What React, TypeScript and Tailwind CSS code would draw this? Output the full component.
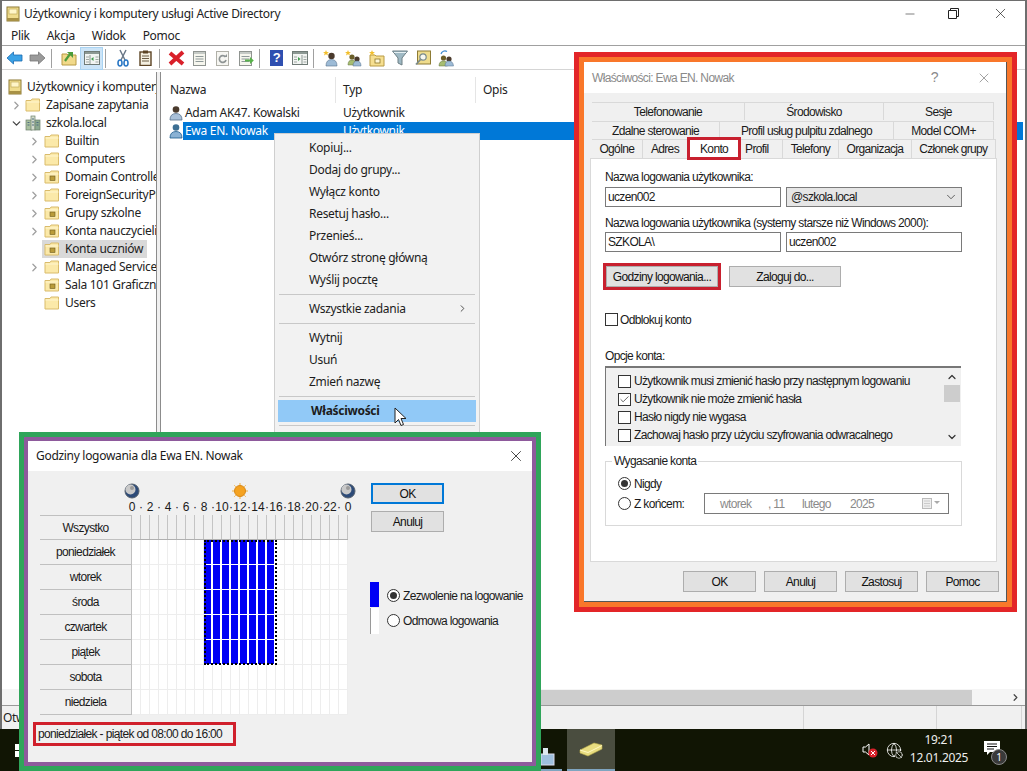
import React from "react";
import { ChevronRight, ChevronDown, ChevronUp, X, Minus, Check, Globe, Ban } from "lucide-react";

const ui = "font-['Noto_Sans','Open_Sans',sans-serif] tracking-[-0.3px]";
const dlg = "font-['Liberation_Sans',Arial,sans-serif] tracking-[-0.65px]";

const Folder = ({ ou = false }: { ou?: boolean }) => (
  <svg width="16" height="14" viewBox="0 0 16 14" className="shrink-0">
    <path d="M1 2.5 h5 l1-1.5 h7.5 v12 h-13.5z" fill="#fbe9a9" stroke="#d9bb6b" />
    <path d="M1.5 4 h13" stroke="#fff6d0" />
    {ou && <rect x="6" y="6" width="5" height="4.5" fill="#b99b3a" stroke="#6d5a1f" strokeWidth="0.6" />}
  </svg>
);

const RootIcon = () => (
  <svg width="14" height="16" viewBox="0 0 14 16" className="shrink-0">
    <rect x="1" y="1" width="12" height="14" fill="#f0dd8e" stroke="#8d7b35" />
    <rect x="3" y="3" width="8" height="5" fill="#fff6c8" stroke="#b9a24f" strokeWidth="0.6" />
    <rect x="1" y="12" width="12" height="3" fill="#a89145" />
  </svg>
);

const DomainIcon = () => (
  <svg width="16" height="16" viewBox="0 0 16 16" className="shrink-0">
    <rect x="1" y="5" width="6" height="10" fill="#a9c0a0" stroke="#6c7f6a" strokeWidth="0.7" />
    <rect x="6" y="1" width="4" height="14" fill="#d3dccd" stroke="#6c7f6a" strokeWidth="0.7" />
    <rect x="10" y="5" width="5" height="10" fill="#8ba990" stroke="#6c7f6a" strokeWidth="0.7" />
    <path d="M2.5 7.5h2M2.5 10h2M11.5 7.5h2M11.5 10h2M7 4h2M7 7h2M7 10h2" stroke="#4f6d7f" />
  </svg>
);

const UserIcon = ({ selected = false }: { selected?: boolean }) => (
  <svg width="14" height="16" viewBox="0 0 14 16" className="shrink-0">
    <circle cx="7" cy="4.5" r="3.3" fill={selected ? "#3d6f93" : "#4a3a2c"} />
    <path d="M1 15 q0-6.5 6-6.5 t6 6.5z" fill={selected ? "#8ab2d4" : "#a9c0d8"} stroke={selected ? "#1b5a8c" : "#55708c"} strokeWidth="0.8" />
  </svg>
);

const ArrowBtn = ({ color, edge, flip = false }: { color: string; edge: string; flip?: boolean }) => (
  <svg width="17" height="14" viewBox="0 0 17 14" className={flip ? "-scale-x-100" : ""}>
    <path d="M1 7 L7.5 1 V4 H16 V10 H7.5 V13z" fill={color} stroke={edge} strokeWidth="0.8" />
  </svg>
);

const Doc = ({ accent }: { accent?: string }) => (
  <svg width="16" height="17" viewBox="0 0 16 17">
    <rect x="1.5" y="1.5" width="12" height="14" fill="#f6f6ee" stroke="#8f9490" />
    <rect x="2" y="2" width="11" height="2" fill="#c5cac6" />
    <path d="M3.5 6.5h8M3.5 9h8M3.5 11.5h8" stroke="#8f9a9a" />
    {accent && <path d="M7 9.5h5V7l3.8 3.5L12 14v-2.5H7z" fill={accent} />}
  </svg>
);

const PanelIcon = ({ mark, right = false }: { mark: string; right?: boolean }) => (
  <svg width="16" height="14" viewBox="0 0 16 14">
    <rect x="0.5" y="0.5" width="15" height="13" fill="#f2f4f2" stroke="#6f7a76" />
    <rect x="1" y="1" width="14" height="2" fill="#8c9893" />
    <path d={right ? "M10 4v9" : "M6 4v9"} stroke="#8c9893" />
    <path d="M2 6h3M2 8.5h3M2 11h3M11.5 6h3M11.5 8.5h3M11.5 11h3" stroke="#a0a8a4" />
    <path d={right ? "M6 6v4l2.5-2z" : "M9.5 6v4l-2.5-2z"} fill={mark} />
  </svg>
);

const Star = ({ x, y }: { x: number; y: number }) => (
  <path transform={`translate(${x} ${y})`} d="M3 0l.8 2H6L4.3 3.3 5 5.5 3 4.3 1 5.5l.7-2.2L0 2h2.2z" fill="#f2bf2c" />
);

const Toolbar = () => {
  const sep = <div className="w-px h-[19px] bg-[#a0a0a0] ml-[2px] mr-[5px]" />;
  const slot = "w-[23px] h-[23px] flex items-center justify-center shrink-0";
  return (
    <div className="h-[24px] flex items-center pl-px pt-px border-b border-[#d5d5d5]">
      <div className={slot}><ArrowBtn color="#3ba2e6" edge="#1a6ab0" /></div>
      <div className={slot}><ArrowBtn color="#9a9a9a" edge="#777" flip /></div>
      {sep}
      <div className={slot}>
        <svg width="16" height="16" viewBox="0 0 16 16"><path d="M1 4h5l1 1h8v10H1z" fill="#f1d98a" stroke="#b89a45" /><path d="M4 11 l5-7" stroke="#4c9c3a" strokeWidth="2.2" fill="none" /><path d="M6 2h6v6z" fill="#4c9c3a" /></svg>
      </div>
      <div className={`${slot} bg-[#cce4f7] border border-[#a9d3f2]`}><PanelIcon mark="#3e9c4c" /></div>
      {sep}
      <div className={slot}>
        <svg width="12" height="18" viewBox="0 0 12 18"><path d="M9 1 L4 11 M3 1 l5 10" stroke="#6a7888" strokeWidth="1.5" /><ellipse cx="3" cy="14" rx="2" ry="3" fill="none" stroke="#2b78c5" strokeWidth="1.6" /><ellipse cx="9" cy="14" rx="2" ry="3" fill="none" stroke="#2b78c5" strokeWidth="1.6" /></svg>
      </div>
      <div className={slot}>
        <svg width="13" height="16" viewBox="0 0 13 16"><rect x="1" y="2" width="11" height="13.5" fill="#f4efe0" stroke="#5c4424" strokeWidth="1.4" /><rect x="4" y="0.5" width="5" height="3" fill="#5c4424" /><path d="M3 6h7M3 8.5h7M3 11h7" stroke="#6b5c44" /></svg>
      </div>
      {sep}
      <div className={slot}>
        <svg width="17" height="16" viewBox="0 0 17 16"><path d="M2 3 L15 14 M15 2 L2 14" stroke="#d9202a" strokeWidth="4" /></svg>
      </div>
      <div className={slot}><Doc /></div>
      <div className={slot}>
        <svg width="16" height="17" viewBox="0 0 16 17"><rect x="1.5" y="1.5" width="12" height="14" fill="#f6f6f2" stroke="#b0b0a8" /><path d="M10.5 7a3.4 3.4 0 1 0 .5 3" fill="none" stroke="#8e9494" strokeWidth="1.7" /><path d="M9 7h3V4z" fill="#8e9494" /></svg>
      </div>
      <div className={slot}><Doc accent="#58b24a" /></div>
      {sep}
      <div className={slot}>
        <div className={`w-[13px] h-[16px] bg-[#2f4fb0] text-white text-[13px] leading-[16px] text-center font-bold ${dlg}`}>?</div>
      </div>
      <div className={slot}><PanelIcon mark="#3e9c4c" right /></div>
      {sep}
      <div className={slot}>
        <svg width="16" height="17" viewBox="0 0 16 17"><Star x={0} y={0} /><circle cx="8.5" cy="6" r="3.2" fill="#4a3a2c" /><path d="M3 16q0-6.5 5.5-6.5T14 16z" fill="#9dbbd6" stroke="#55708c" strokeWidth="0.6" /></svg>
      </div>
      <div className={slot}>
        <svg width="17" height="17" viewBox="0 0 17 17"><Star x={0} y={0} /><circle cx="7" cy="7" r="2.6" fill="#6b5f2a" /><circle cx="12" cy="9" r="2.6" fill="#4a3a2c" /><path d="M3 15q0-5 4-5t4 5z" fill="#a7bd72" stroke="#60703c" strokeWidth="0.5" /><path d="M8 16q0-5 4-5t4 5z" fill="#9dbbd6" stroke="#55708c" strokeWidth="0.5" /></svg>
      </div>
      <div className={slot}>
        <svg width="16" height="17" viewBox="0 0 16 17"><path d="M1 5h5l1 1h8v10H1z" fill="#f6df90" stroke="#b89a45" /><rect x="6" y="9" width="5" height="4" fill="#fff8d8" stroke="#8a742a" strokeWidth="0.8" /><Star x={0} y={0} /></svg>
      </div>
      <div className={slot}>
        <svg width="16" height="16" viewBox="0 0 16 16"><path d="M0.5 1h15L10 8v7l-4-2V8z" fill="#9fb9c4" stroke="#6c7e84" /><path d="M2 2.5h12" stroke="#e6f0f3" /></svg>
      </div>
      <div className={slot}>
        <svg width="16" height="16" viewBox="0 0 16 16"><rect x="2.5" y="1" width="13" height="13" fill="#efdc8d" stroke="#8d7b35" /><circle cx="8" cy="7" r="3.2" fill="#f8f8f0" stroke="#7a8a8a" strokeWidth="1.2" /><path d="M5.5 9.5l-4.5 5" stroke="#7a8a8a" strokeWidth="1.8" /></svg>
      </div>
      <div className={slot}>
        <svg width="16" height="17" viewBox="0 0 16 17"><circle cx="5.5" cy="8" r="2.6" fill="#6b5f2a" /><circle cx="11" cy="9" r="2.6" fill="#4a3a2c" /><path d="M1 16q0-5 4.5-5t4 5z" fill="#a7bd72" stroke="#60703c" strokeWidth="0.5" /><path d="M7 16q0-5 4-5t4.5 5z" fill="#9dbbd6" stroke="#55708c" strokeWidth="0.5" /><path d="M3 4a4 4 0 0 1 6-2.5" stroke="#3b8ad0" strokeWidth="1.2" fill="none" /></svg>
      </div>
    </div>
  );
};

const tree: [string, boolean, boolean, boolean?][] = [
  ["Builtin", true, false],
  ["Computers", true, false],
  ["Domain Controllers", true, true],
  ["ForeignSecurityPrincipals", true, false],
  ["Grupy szkolne", true, true],
  ["Konta nauczycieli", true, true],
  ["Konta uczniów", false, true, true],
  ["Managed Service Accounts", true, false],
  ["Sala 101 Graficzna", false, true],
  ["Users", false, false],
];

const TreePane = () => (
  <div className="w-[154px] shrink-0 overflow-hidden pt-[6px] text-[12px] text-[#222]">
    <div className="h-[18px] flex items-center pl-[6px] gap-[5px] whitespace-nowrap"><RootIcon /><span>Użytkownicy i komputery</span></div>
    <div className="h-[18px] flex items-center pl-[8px] whitespace-nowrap">
      <ChevronRight size={13} color="#a0a0a0" strokeWidth={2.4} className="shrink-0" />
      <div className="w-[2px]" /><Folder /><span className="ml-[5px]">Zapisane zapytania</span>
    </div>
    <div className="h-[18px] flex items-center pl-[8px] whitespace-nowrap">
      <ChevronDown size={13} color="#444" strokeWidth={2.4} className="shrink-0" />
      <div className="w-[2px]" /><DomainIcon /><span className="ml-[5px]">szkola.local</span>
    </div>
    {tree.map(([name, exp, ou, sel]) => (
      <div key={name} className="h-[18px] flex items-center pl-[26px] whitespace-nowrap">
        <div className="w-[14px] shrink-0">{exp && <ChevronRight size={13} color="#a0a0a0" strokeWidth={2.4} />}</div>
        <div className={`flex items-center h-[18px] pl-[2px] pr-[4px] ${sel ? "bg-[#d9d9d9]" : ""}`}>
          <Folder ou={ou} /><span className="ml-[5px]">{name}</span>
        </div>
      </div>
    ))}
  </div>
);

const ListPane = () => (
  <div className="flex-1 min-w-0 overflow-hidden text-[12px] text-[#222]">
    <div className="h-[31px] flex items-center pt-[5px]">
      <div className="w-[175px] pl-[9px] border-r border-[#e5e5e5] h-full flex items-center">Nazwa</div>
      <div className="w-[140px] pl-[7px] border-r border-[#e5e5e5] h-full flex items-center">Typ</div>
      <div className="pl-[7px]">Opis</div>
    </div>
    <div className="h-[19px] flex items-center pl-[8px]">
      <UserIcon /><span className="w-[159px] ml-[1px] pl-[1px]">Adam AK47. Kowalski</span><span>Użytkownik</span>
    </div>
    <div className="h-[18px] flex items-center pl-[8px] pr-[2px]">
      <UserIcon selected />
      <div className="flex-1 h-full bg-[#0078d7] text-white flex items-center pl-[2px]">
        <span className="w-[158px]">Ewa EN. Nowak</span><span>Użytkownik</span>
      </div>
    </div>
  </div>
);

const ContextMenu = () => {
  const item = "h-[22px] flex items-center pl-[33px] pr-[10px]";
  const sep = <div className="h-px bg-[#c8c8c8] mx-[3px] my-[3px]" />;
  return (
    <div className="absolute left-[274px] top-[133px] w-[206px] h-[320px] bg-[#f2f2f2] border border-[#cfcfcf] pt-[2.5px] text-[12px] text-[#1c1c1c] px-px">
      {["Kopiuj...", "Dodaj do grupy...", "Wyłącz konto", "Resetuj hasło...", "Przenieś...", "Otwórz stronę główną", "Wyślij pocztę"].map((t) => (
        <div key={t} className={item}>{t}</div>
      ))}
      {sep}
      <div className={`${item} justify-between`}><span>Wszystkie zadania</span><ChevronRight size={11} color="#444" /></div>
      {sep}
      {["Wytnij", "Usuń", "Zmień nazwę"].map((t) => (
        <div key={t} className={item}>{t}</div>
      ))}
      {sep}
      <div className={`${item} bg-[#91c9f7] font-bold mx-[2px] pl-[31px]`}>Właściwości</div>
      {sep}
      <svg width="14" height="20" viewBox="0 0 14 20" className="absolute left-[119px] top-[273px]">
        <path d="M1 1v15l3.5-3.5 2.5 6 2.5-1-2.5-6h5z" fill="#fff" stroke="#222" strokeWidth="1" />
      </svg>
    </div>
  );
};

const Box = ({ w, h, children, bg = "bg-white" }: { w: string; h?: string; children?: React.ReactNode; bg?: string }) => (
  <div className={`${w} ${h ?? "h-[20px]"} ${bg} border border-[#7a7a7a] flex items-center pl-[2px] leading-none`}>{children}</div>
);

const WinBtn = ({ label, cls = "" }: { label: string; cls?: string }) => (
  <div className={`h-[21px] flex items-center justify-center whitespace-nowrap bg-[#e1e1e1] border border-[#adadad] text-[#111] ${cls}`}>{label}</div>
);

const Check13 = ({ on = false }: { on?: boolean }) => (
  <div className="w-[13px] h-[13px] shrink-0 border border-[#333] bg-white flex items-center justify-center">
    {on && <Check size={11} color="#333" strokeWidth={1.6} />}
  </div>
);

const Radio = ({ on = false }: { on?: boolean }) => (
  <div className="w-[13px] h-[13px] shrink-0 rounded-full border border-[#333] bg-white flex items-center justify-center">
    {on && <div className="w-[7px] h-[7px] rounded-full bg-[#333]" />}
  </div>
);

const Tab = ({ w, label, cls = "" }: { w: string; label: string; cls?: string }) => (
  <div className={`${w} h-full flex items-center justify-center bg-[#f0f0f0] border-t border-r border-[#d9d9d9] whitespace-nowrap ${cls}`}>{label}</div>
);

const PropsDialog = () => (
  <div className={`absolute left-[574px] top-[52px] w-[443px] h-[560px] border-[5px] border-[#e32528] ${dlg}`}>
    <div className="w-full h-full border-[5px] border-[#f9772a]">
      <div className="w-full h-full bg-[#f0f0f0] border-r border-b border-[#555] text-[12px] text-[#1a1a1a] flex flex-col">
        <div className="h-[31px] shrink-0 bg-white flex items-center pl-[8px] pr-[14px] text-[#8a8a8a]">
          <span className="flex-1 text-[12px]">Właściwości: Ewa EN. Nowak</span>
          <span className="text-[14px] mr-[38px]">?</span>
          <X size={16} color="#8a8a8a" strokeWidth={1.2} />
        </div>
        <div className="ml-[8px] mt-[9px] w-[404px]">
          <div className="flex h-[18px] mb-px">
            <Tab w="w-[153px]" label="Telefonowanie" />
            <Tab w="w-[139px]" label="Środowisko" />
            <Tab w="w-[110px]" label="Sesje" />
          </div>
          <div className="flex h-[18px]">
            <Tab w="w-[128px]" label="Zdalne sterowanie" />
            <Tab w="w-[174px]" label="Profil usług pulpitu zdalnego" />
            <Tab w="w-[100px]" label="Model COM+" />
          </div>
          <div className="flex h-[19px] relative">
            <Tab w="w-[51px]" label="Ogólne" />
            <Tab w="w-[46px]" label="Adres" />
            <div className="w-[52px] h-[21px] -mt-px z-10 bg-white flex items-center justify-center outline-[3px] outline-[#c8202f] -outline-offset-2">Konto</div>
            <Tab w="w-[43px]" label="Profil" cls="pr-[8px]" />
            <Tab w="w-[57px]" label="Telefony" />
            <Tab w="w-[73px]" label="Organizacja" />
            <Tab w="w-[85px]" label="Członek grupy" />
          </div>
        </div>
        <div className="ml-[6px] w-[407px] h-[404px] bg-white border border-[#d9d9d9] pl-[14px] pt-[10px]">
          <div className="h-[16px] flex items-center">Nazwa logowania użytkownika:</div>
          <div className="flex gap-[5px] mt-[2px]">
            <Box w="w-[176px]">uczen002</Box>
            <Box w="w-[176px]" bg="bg-[#e6e6e6]">
              <span className="flex-1 pl-[2px]">@szkola.local</span>
              <ChevronDown size={14} color="#444" strokeWidth={1.4} className="mr-[3px]" />
            </Box>
          </div>
          <div className="h-[16px] flex items-center mt-[8px]">Nazwa logowania użytkownika (systemy starsze niż Windows 2000):</div>
          <div className="flex gap-[5px] mt-px">
            <Box w="w-[176px]">SZKOLA\</Box>
            <Box w="w-[176px]">uczen002</Box>
          </div>
          <div className="flex gap-[11px] mt-[14px]">
            <WinBtn label="Godziny logowania..." cls="w-[112px] ml-px outline-[3px] outline-[#c8202f]" />
            <WinBtn label="Zaloguj do..." cls="w-[112px]" />
          </div>
          <div className="flex items-center gap-[2px] mt-[26px] h-[13px]"><Check13 /><span>Odblokuj konto</span></div>
          <div className="h-[16px] flex items-center mt-[22px]">Opcje konta:</div>
          <div className="w-[356px] h-[80px] mt-[2px] bg-[#f0f0f0] border-t-2 border-l border-[#777] flex">
            <div className="flex-1 pl-[12px] pt-[4px]">
              {[
                ["Użytkownik musi zmienić hasło przy następnym logowaniu", false],
                ["Użytkownik nie może zmienić hasła", true],
                ["Hasło nigdy nie wygasa", false],
                ["Zachowaj hasło przy użyciu szyfrowania odwracalnego", false],
              ].map(([t, on]) => (
                <div key={t as string} className="h-[18px] flex items-center gap-[3px] whitespace-nowrap"><Check13 on={on as boolean} /><span>{t}</span></div>
              ))}
            </div>
            <div className="w-[16px] mr-px flex flex-col items-center justify-between py-[3px]">
              <div className="flex flex-col items-center w-full">
                <ChevronUp size={12} color="#333" strokeWidth={2.4} />
                <div className="w-full h-[17px] bg-[#cdcdcd] mt-[2px]" />
              </div>
              <ChevronDown size={12} color="#333" strokeWidth={2.4} />
            </div>
          </div>
          <div className="relative w-[357px] h-[65px] mt-[15px] border border-[#d9d9d9] pl-[12px] pt-[15px]">
            <span className="absolute left-[6px] -top-[8px] bg-white px-[2px] leading-[14px]">Wygasanie konta</span>
            <div className="flex items-center gap-[3px] h-[13px]"><Radio on /><span>Nigdy</span></div>
            <div className="flex items-center mt-[3px] h-[21px]">
              <Radio /><span className="ml-[3px] w-[70px]">Z końcem:</span>
              <div className="w-[245px] h-[21px] border border-[#7a7a7a] flex items-center text-[#8a8a8a] pl-[15px]">
                <span className="w-[48px]">wtorek</span><span className="w-[34px]">, 11</span><span className="w-[48px]">lutego</span><span className="flex-1">2025</span>
                <svg width="18" height="11" viewBox="0 0 18 11" className="mr-[8px]"><rect x="0.5" y="0.5" width="9" height="10" fill="#eee" stroke="#bbb" /><path d="M2 3h6M2 5.5h6M2 8h6" stroke="#ccc" /><path d="M12 3h6l-3 3z" fill="#aaa" /></svg>
              </div>
            </div>
          </div>
        </div>
        <div className="ml-[99px] mt-[9px] flex gap-[8px]">
          {["OK", "Anuluj", "Zastosuj", "Pomoc"].map((t) => <WinBtn key={t} label={t} cls="w-[73px]" />)}
        </div>
      </div>
    </div>
  </div>
);

const Moon = () => (
  <svg width="16" height="16" viewBox="0 0 16 16" className="shrink-0">
    <circle cx="8" cy="8" r="7" fill="#2c4a78" stroke="#55606c" />
    <circle cx="6.5" cy="6.5" r="5" fill="#c9c9c9" />
    <circle cx="8" cy="5" r="2" fill="#9a9a9a" />
  </svg>
);

const Sun = () => (
  <svg width="16" height="16" viewBox="0 0 16 16" className="shrink-0">
    <circle cx="8" cy="8" r="5.5" fill="#f5a21f" stroke="#d98712" />
    <path d="M8 0v2M8 14v2M0 8h2M14 8h2M2.3 2.3l1.4 1.4M12.3 12.3l1.4 1.4M2.3 13.7l1.4-1.4M12.3 3.7l1.4-1.4" stroke="#f0b040" />
  </svg>
);

const hourLabels = Array.from({ length: 25 }, (_, i) => (i === 24 ? "0" : i % 2 === 0 ? String(i) : "·"));
const days = ["poniedziałek", "wtorek", "środa", "czwartek", "piątek", "sobota", "niedziela"];

const HoursDialog = () => (
  <div className={`absolute left-[19px] top-[432px] w-[522px] h-[339px] border-[5px] border-[#2fa55a] ${dlg}`}>
    <div className="w-full h-full border-[4px] border-[#8e5a9c]">
      <div className="w-full h-full bg-[#f0f0f0] text-[12px] text-[#1a1a1a] flex flex-col">
        <div className={`h-[30px] shrink-0 bg-white flex items-center pl-[8px] pr-[7px] text-[12px] ${ui}`}>
          <span className="flex-1">Godziny logowania dla Ewa EN. Nowak</span>
          <X size={18} color="#222" strokeWidth={1.1} />
        </div>
        <div className="flex flex-1">
          <div className="pl-[12px] w-[343px] shrink-0">
            <div className="ml-[87.5px] mt-[12px] flex h-[16px]">
              {hourLabels.map((_, i) => (
                <div key={i} className="w-[9px] flex justify-center overflow-visible">
                  {(i === 0 || i === 24) && <Moon />}
                  {i === 12 && <Sun />}
                </div>
              ))}
            </div>
            <div className="ml-[87.5px] flex h-[15px] items-center tracking-normal">
              {hourLabels.map((t, i) => (
                <div key={i} className="w-[9px] flex justify-center overflow-visible whitespace-nowrap">{t}</div>
              ))}
            </div>
            <div className="relative mt-px">
              <div className="flex h-[25px]">
                <div className="w-[92px] bg-[#f0f0f0] border-y border-r border-[#c0c0c0] flex items-center justify-center shrink-0">Wszystko</div>
                <div className="flex border-b border-[#b0b0b0]">
                  {Array.from({ length: 24 }, (_, i) => (
                    <div key={i} className="w-[9px] border-r border-[#c4c4c4]" />
                  ))}
                </div>
              </div>
              {days.map((d, r) => (
                <div key={d} className="flex h-[25px]">
                  <div className="w-[92px] bg-[#f0f0f0] border-b border-r border-[#c0c0c0] flex items-center justify-center shrink-0">{d}</div>
                  {Array.from({ length: 24 }, (_, c) => {
                    const on = r < 5 && c >= 8 && c < 16;
                    return <div key={c} className={on ? "w-[9px] bg-[#0000f5] border-r-2 border-b border-white" : "w-[9px] bg-white border-r border-b border-[#ededed]"} />;
                  })}
                </div>
              ))}
              <div className="absolute left-[164px] top-[25px] w-[73px] h-[125px] border-2 border-dotted border-black" />
            </div>
            <div className="w-[197px] h-[18px] mt-[10px] -ml-[4px] flex items-center pl-[2px] whitespace-nowrap outline-[3px] outline-[#d0202c]">poniedziałek - piątek od 08:00 do 16:00</div>
          </div>
          <div className="pt-[12px]">
            <WinBtn label="OK" cls="w-[73px] !border-2 !border-[#0078d7]" />
            <WinBtn label="Anuluj" cls="w-[73px] mt-[7px]" />
            <div className="flex mt-[50px]">
              <div className="w-[9px] -ml-px">
                <div className="h-[25px] bg-[#0000f5]" />
                <div className="h-[26px] bg-white border-l border-[#999] mt-px" />
              </div>
              <div className="ml-[8px] pt-[7px]">
                <div className="flex items-center gap-[3px] h-[13px] whitespace-nowrap"><Radio on /><span>Zezwolenie na logowanie</span></div>
                <div className="flex items-center gap-[3px] h-[13px] mt-[12px] whitespace-nowrap"><Radio /><span>Odmowa logowania</span></div>
              </div>
            </div>
          </div>
        </div>
      </div>
    </div>
  </div>
);

const Taskbar = () => (
  <div className="h-[42px] shrink-0 bg-[#111504] flex items-stretch text-white">
    <div className="w-[15px]" />
    <svg width="13" height="13" viewBox="0 0 13 13" className="self-center"><path d="M0 0h6v6H0zM7 0h6v6H7zM0 7h6v6H0zM7 7h6v6H7z" fill="#fff" /></svg>
    <div className="ml-[513px] w-[21px] border-b-[2px] border-[#7fa5c0] flex items-end">
      <svg width="14" height="20" viewBox="0 0 14 20" className="mb-[3px]"><rect x="0" y="8" width="13" height="11" fill="#9fc0de" stroke="#dde" /><rect x="2" y="2" width="5" height="7" fill="#dce8f0" /></svg>
    </div>
    <div className="ml-[5px] w-[48px] bg-[#4a4d3f] border-b-[2px] border-[#7fa5c0] flex items-center justify-center">
      <svg width="24" height="15" viewBox="0 0 24 15"><path d="M1 8 L15 1 L23 3 V7 L9 14 L1 11z" fill="#e8dd80" stroke="#b5a948" strokeWidth="0.6" /><path d="M1 8 L9 10.5 L23 3.5" stroke="#fff8c0" fill="none" /></svg>
    </div>
    <div className="flex-1" />
    <div className="flex items-center">
      <svg width="16" height="18" viewBox="0 0 16 18" className="mr-[8px]"><path d="M1 6h2.5L7 3v11L3.5 11H1z" fill="none" stroke="#fff" /><circle cx="11" cy="12" r="4.5" fill="#d9202a" /><path d="M9 10l4 4M13 10l-4 4" stroke="#fff" /></svg>
      <div className="relative">
        <Globe size={16} color="#fff" strokeWidth={1.2} />
        <Ban size={8} color="#fff" className="absolute -right-[1px] -bottom-[1px] bg-[#111504] rounded-full" />
      </div>
      <div className={`w-[74px] -mt-[2px] text-center text-[12px] leading-[18px] text-[#eee] ${ui}`}>
        <div>19:21</div>
        <div>12.01.2025</div>
      </div>
      <div className="relative w-[51px] h-full flex items-center justify-start pl-[8px] pb-[3px]">
        <svg width="16" height="15" viewBox="0 0 16 15"><path d="M0 0h16v11H6l-3 3v-3H0z" fill="#fff" /><path d="M3 3h10M3 5.5h10M3 8h7" stroke="#111" /></svg>
        <div className={`absolute left-[15px] top-[20px] w-[16px] h-[16px] rounded-full bg-[#3a3a3a] border border-[#888] text-[10px] leading-[14px] text-center ${ui}`}>1</div>
      </div>
    </div>
  </div>
);

export default function App() {
  return (
    <div className={`relative w-[1027px] h-[771px] overflow-hidden bg-white flex flex-col ${ui}`}>
      <div className="flex-1 min-h-0 flex flex-col border-l-2 border-t border-r-2 border-[#6e6e6e] bg-white">
        <div className="h-[25px] flex items-center pl-[4px] text-[12px] text-[#222]">
          <RootIcon />
          <span className="ml-[4px] flex-1">Użytkownicy i komputery usługi Active Directory</span>
          <Minus size={14} color="#222" strokeWidth={1} className="mr-[31px]" />
          <svg width="11" height="11" viewBox="0 0 11 11" className="mr-[33px]"><path d="M2.5 2.5V.5h8v8h-2M.5 2.5h8v8h-8z" fill="none" stroke="#222" /></svg>
          <X size={17} color="#222" strokeWidth={1} className="mr-[16px]" />
        </div>
        <div className="h-[20px] flex items-center gap-[17px] pl-[9px] text-[12px] text-[#222] border-b border-[#a0a0a0]">
          <span>Plik</span><span>Akcja</span><span>Widok</span><span>Pomoc</span>
        </div>
        <Toolbar />
        <div className="flex-1 min-h-0 flex mt-[2px]">
          <TreePane />
          <div className="w-[5px] shrink-0 bg-[#f0f0f0] border-x border-[#8c8c8c]" />
          <ListPane />
        </div>
        <div className="h-[16px] shrink-0 flex items-center bg-[#f5f5f5] pl-[160px]">
          <div className="flex-1 h-[15px] bg-[#cdcdcd]" />
          <div className="w-[53px] flex justify-end pr-[4px]"><ChevronRight size={11} color="#444" strokeWidth={2.6} /></div>
        </div>
        <div className="h-[24px] shrink-0 bg-[#f0f0f0] border-t border-[#999] flex text-[12px] text-[#222]">
          <div className="w-[802px] pl-[1px] border-r border-[#d5d5d5] flex items-center">Otw</div>
          <div className="w-[133px] border-r border-[#d5d5d5]" />
          <div className="w-[85px] border-r border-[#d5d5d5]" />
        </div>
      </div>
      <Taskbar />
      <ContextMenu />
      <PropsDialog />
      <HoursDialog />
    </div>
  );
}
